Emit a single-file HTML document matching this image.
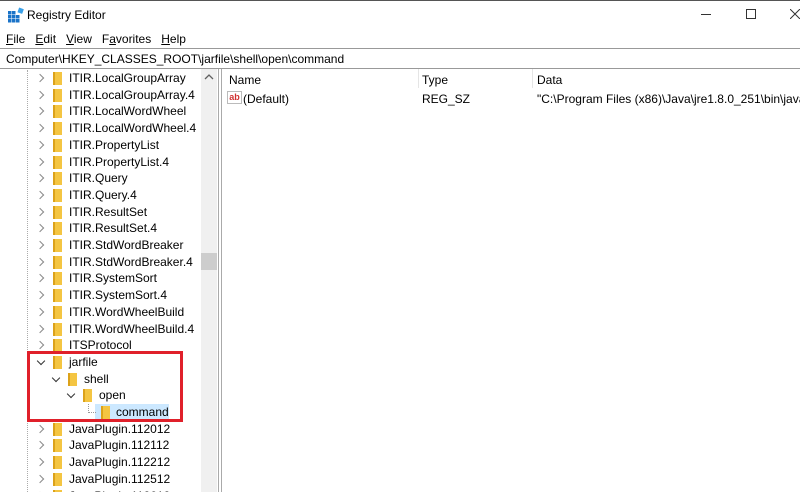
<!DOCTYPE html>
<html><head><style>
*{margin:0;padding:0;box-sizing:border-box}
html,body{width:800px;height:492px;overflow:hidden}
body{background:#fff;font-family:"Liberation Sans",sans-serif;font-size:12px;color:#000;position:relative}
.a{position:absolute;white-space:nowrap}
.row{position:absolute;height:17px;line-height:17px;white-space:nowrap}
.chev{position:absolute;width:6px;height:6px;border-right:1.3px solid #8a8a8a;border-bottom:1.3px solid #8a8a8a}
.r{transform:rotate(-45deg)}
.d{transform:rotate(45deg);border-color:#333}
.fold{position:absolute;width:9px;height:13px;background:#f4c542;border-left:2px solid #dca21a}
</style></head><body>
<div class="a" style="left:0;top:0;width:800px;height:1px;background:#555"></div>
<svg class="a" style="left:8px;top:7px" width="16" height="16" viewBox="0 0 16 16">
<rect x="0" y="4" width="3.5" height="3.5" fill="#1a73c8"/><rect x="4" y="4" width="3.5" height="3.5" fill="#1a73c8"/>
<rect x="0" y="8" width="3.5" height="3.5" fill="#1a73c8"/><rect x="4" y="8" width="3.5" height="3.5" fill="#1a73c8"/><rect x="8" y="8" width="3.5" height="3.5" fill="#1a73c8"/>
<rect x="0" y="12" width="3.5" height="3.5" fill="#1a73c8"/><rect x="4" y="12" width="3.5" height="3.5" fill="#1a73c8"/><rect x="8" y="12" width="3.5" height="3.5" fill="#1a73c8"/>
<rect x="10" y="1" width="5" height="5" fill="#3aa0e8" transform="rotate(20 12 4)"/></svg>
<div class="a" style="left:27px;top:8px;font-size:12px">Registry Editor</div>
<div class="a" style="left:701px;top:14px;width:10px;height:1px;background:#333"></div>
<div class="a" style="left:746px;top:9px;width:10px;height:10px;border:1px solid #333"></div>
<svg class="a" style="left:790px;top:9px" width="10" height="10"><path d="M0 0L10 10M10 0L0 10" stroke="#333" stroke-width="1"/></svg>
<div class="a" style="left:6px;top:32px"><u>F</u>ile&nbsp;&nbsp;&nbsp;<u>E</u>dit&nbsp;&nbsp;&nbsp;<u>V</u>iew&nbsp;&nbsp;&nbsp;F<u>a</u>vorites&nbsp;&nbsp;&nbsp;<u>H</u>elp</div>
<div class="a" style="left:0;top:48px;width:800px;height:1px;background:#999"></div>
<div class="a" style="left:6px;top:52px">Computer\HKEY_CLASSES_ROOT\jarfile\shell\open\command</div>
<div class="a" style="left:0;top:68px;width:800px;height:1px;background:#999"></div>
<div class="a" style="left:27px;top:70px;height:422px;border-left:1px dotted #aaa"></div>
<div class="a" style="left:201px;top:69px;width:16px;height:423px;background:#f0f0f0"></div>
<div class="a" style="left:201px;top:253px;width:16px;height:17px;background:#cdcdcd"></div>
<svg class="a" style="left:204px;top:74px" width="10" height="6"><path d="M1 5L5 1L9 5" stroke="#606060" fill="none" stroke-width="1.3"/></svg>
<div class="a" style="left:218px;top:69px;width:1px;height:423px;background:#aaa"></div>
<div class="a" style="left:221px;top:69px;width:1px;height:423px;background:#aaa"></div>
<div class="a" style="left:95px;top:404px;width:74px;height:17px;background:#cce8ff"></div>
<div id="tree"></div>
<div class="a" style="left:229px;top:73px">Name</div>
<div class="a" style="left:422px;top:73px">Type</div>
<div class="a" style="left:537px;top:73px">Data</div>
<div class="a" style="left:418px;top:69px;width:1px;height:19px;background:#e5e5e5"></div>
<div class="a" style="left:532px;top:69px;width:1px;height:19px;background:#e5e5e5"></div>
<div class="a" style="left:227px;top:91px;width:15px;height:13px;background:#fff;border:1px solid #bbb;color:#d03030;font-size:9px;font-weight:bold;line-height:10px;text-align:center">ab</div>
<div class="a" style="left:243px;top:92px">(Default)</div>
<div class="a" style="left:422px;top:92px">REG_SZ</div>
<div class="a" style="left:537px;top:92px;width:263px;overflow:hidden">"C:\Program Files (x86)\Java\jre1.8.0_251\bin\javaw...</div>
<div class="a" style="left:27px;top:351px;width:156px;height:71px;border:3px solid #e0202a"></div>
<script>
var items=[["ITIR.LocalGroupArray",0],["ITIR.LocalGroupArray.4",0],["ITIR.LocalWordWheel",0],["ITIR.LocalWordWheel.4",0],["ITIR.PropertyList",0],["ITIR.PropertyList.4",0],["ITIR.Query",0],["ITIR.Query.4",0],["ITIR.ResultSet",0],["ITIR.ResultSet.4",0],["ITIR.StdWordBreaker",0],["ITIR.StdWordBreaker.4",0],["ITIR.SystemSort",0],["ITIR.SystemSort.4",0],["ITIR.WordWheelBuild",0],["ITIR.WordWheelBuild.4",0],["ITSProtocol",0],["jarfile",0,1],["shell",1,1],["open",2,1],["command",3,2],["JavaPlugin.112012",0],["JavaPlugin.112112",0],["JavaPlugin.112212",0],["JavaPlugin.112512",0],["JavaPlugin.112612",0]];
var h="";
items.forEach(function(it,i){var y=70+i*16.7;var x=it[1]*15;
if(it[2]==1)h+='<div class="chev d" style="left:'+(38+x)+'px;top:'+(y+4)+'px"></div>';
else if(it[2]==2)h+='<div class="a" style="left:88px;top:'+y+'px;height:9px;width:8px;border-left:1px dotted #999;border-bottom:1px dotted #999"></div>';
else h+='<div class="chev r" style="left:'+(37+x)+'px;top:'+(y+5)+'px"></div>';
h+='<div class="fold" style="left:'+(53+x+(it[2]==2?3:0))+'px;top:'+(y+2)+'px"></div>';
h+='<div class="row" style="left:'+(69+x+(it[2]==2?2:0))+'px;top:'+y+'px">'+it[0]+'</div>';});
document.getElementById("tree").innerHTML=h;
</script>
</body></html>
